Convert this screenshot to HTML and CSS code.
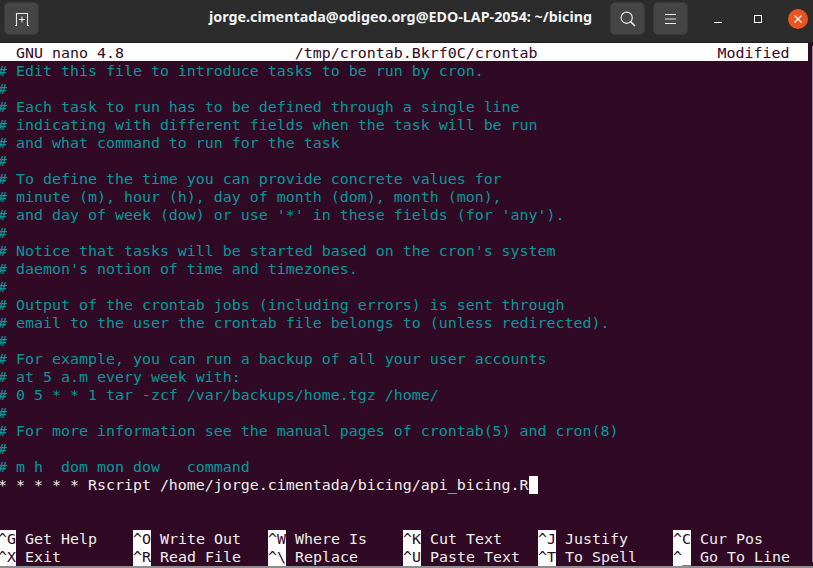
FILE: index.html
```html
<!DOCTYPE html>
<html lang="en">
<head>
<meta charset="utf-8">
<title>Terminal</title>
<link rel="stylesheet" href="styles.css">
</head>
<body>
<div class="window">
<header class="titlebar">
  <button class="tb-btn new-tab"><svg width="16" height="14" viewBox="0 0 16 14"><path d="M1 13.5h1.5V1.5h11v12H15M8 4.5v6M5 7.5h6" fill="none" stroke="#e8e8e6" stroke-width="1.1"/></svg></button>
  <div class="title">jorge.cimentada@odigeo.org@EDO-LAP-2054: ~/bicing</div>
  <button class="tb-btn"><svg width="16" height="16" viewBox="0 0 16 16"><circle cx="6.7" cy="6.7" r="5.6" fill="none" stroke="#e8e8e6" stroke-width="1.2"/><path d="M10.6 10.6L15 15" stroke="#e8e8e6" stroke-width="1.6"/></svg></button>
  <button class="tb-btn menu"><svg width="12" height="12" viewBox="0 0 12 12"><path d="M0 1.5h11M0 6h11M0 10.5h11" stroke="#e8e8e6" stroke-width="1"/></svg></button>
  <div class="win-controls">
    <svg class="min" width="10" height="10" viewBox="0 0 10 10"><path d="M1 8.5h8" stroke="#fff" stroke-width="1"/></svg>
    <svg class="max" width="10" height="10" viewBox="0 0 10 10"><rect x="1.5" y="1.5" width="7" height="7" fill="none" stroke="#fff" stroke-width="1"/></svg>
    <span class="close"><svg width="10" height="10" viewBox="0 0 10 10"><path d="M1.5 1.5l7 7M8.5 1.5l-7 7" stroke="#fff" stroke-width="1.2"/></svg></span>
  </div>
</header>
<main class="term">
<div class="statusbar"><span class="st-text">  GNU nano 4.8                   /tmp/crontab.Bkrf0C/crontab                    Modified</span></div>
<pre class="editor"><span class="c"># Edit this file to introduce tasks to be run by cron.
# 
# Each task to run has to be defined through a single line
# indicating with different fields when the task will be run
# and what command to run for the task
# 
# To define the time you can provide concrete values for
# minute (m), hour (h), day of month (dom), month (mon),
# and day of week (dow) or use '*' in these fields (for 'any').
# 
# Notice that tasks will be started based on the cron's system
# daemon's notion of time and timezones.
# 
# Output of the crontab jobs (including errors) is sent through
# email to the user the crontab file belongs to (unless redirected).
# 
# For example, you can run a backup of all your user accounts
# at 5 a.m every week with:
# 0 5 * * 1 tar -zcf /var/backups/home.tgz /home/
# 
# For more information see the manual pages of crontab(5) and cron(8)
# 
# m h  dom mon dow   command
</span>* * * * * Rscript /home/jorge.cimentada/bicing/api_bicing.R<span class="cursor"> </span></pre>
<div class="shortcuts">
  <div class="sc"><b>^G</b> Get Help</div><div class="sc"><b>^O</b> Write Out</div><div class="sc"><b>^W</b> Where Is</div><div class="sc"><b>^K</b> Cut Text</div><div class="sc"><b>^J</b> Justify</div><div class="sc"><b>^C</b> Cur Pos</div>
  <div class="sc"><b>^X</b> Exit</div><div class="sc"><b>^R</b> Read File</div><div class="sc"><b>^\</b> Replace</div><div class="sc"><b>^U</b> Paste Text</div><div class="sc"><b>^T</b> To Spell</div><div class="sc"><b>^_</b> Go To Line</div>
</div>
</main>
<div class="edge"></div>
</div>
</body>
</html>
```
FILE: styles.css
```css
* { box-sizing: border-box; }
html, body { margin: 0; height: 100%; overflow: hidden; background: #300a24; }
.window { width: 813px; height: 568px; display: flex; flex-direction: column; overflow: hidden; }
.titlebar { height: 43px; flex: none; display: flex; align-items: flex-start; background: #2c2c2c; padding: 2px 0 0 4px; border-bottom: 1px solid #1f1a1d; }
.tb-btn { width: 35px; height: 33px; padding: 0; border: 1px solid #3a3a3a; border-radius: 5px; background: #454545; display: flex; align-items: center; justify-content: center; margin-right: 8px; }
.title { flex: 1; text-align: center; padding: 5px 0 0 152px; color: #f2f2f2; font: bold 14.3px "Noto Sans", sans-serif; white-space: nowrap; }
.new-tab { margin-right: 0; }
.menu { margin-right: 0; }
.win-controls { display: flex; align-items: center; width: 125px; height: 33px; padding-left: 25px; }
.min { margin-right: 30px; }
.max { margin-right: 25px; }
.close { width: 20px; height: 20px; border-radius: 50%; background: #e95420; display: flex; align-items: center; justify-content: center; }
.term { position: relative; flex: 1; min-height: 0; font: 14.95px/18px "DejaVu Sans Mono", monospace; color: #eeeeec; background: #300a24; }
.term::after { content: ""; position: absolute; top: 3px; right: 0; width: 1px; height: 516px; background: #9a8595; }
.statusbar { height: 18px; margin-right: 5px; padding-top: 1px; background: #fff; color: #300a24; white-space: pre; line-height: 18px; }
.st-text { display: block; margin-left: -2px; }
.editor { margin: 0 0 0 -2px; height: 468px; padding-top: 1px; font: inherit; white-space: pre; }
.c { color: #06989a; }
.cursor { background: #fff; }
.shortcuts { display: grid; grid-template-columns: repeat(6, 135px); margin-left: -2px; padding-top: 1px; white-space: pre; }
.sc { height: 18px; }
.sc b { font-weight: normal; background: #fff; color: #300a24; }
.edge { height: 2px; flex: none; background: #8e8e8e; }
```
